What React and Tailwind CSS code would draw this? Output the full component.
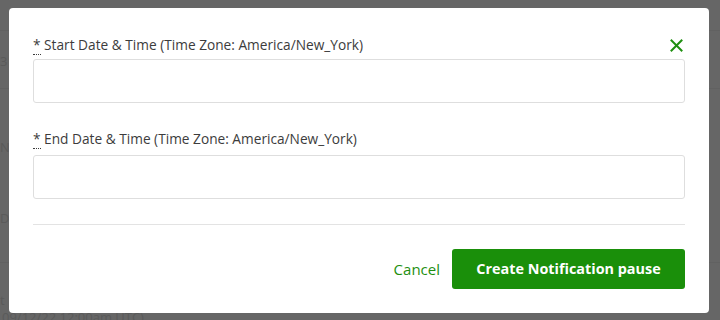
import React from "react";

export default function App() {
  const font = { fontFamily: '"Open Sans", "Noto Sans", sans-serif' };
  return (
    <div className="relative h-[320px] w-[720px] overflow-hidden bg-[#666666]" style={font}>
      {/* faint background page content behind the overlay */}
      <div className="absolute inset-0 text-[13px] text-[#5a5a5a]">
        <div className="absolute left-0 top-[52px]">31</div>
        <div className="absolute left-0 top-[138px]">N</div>
        <div className="absolute left-0 top-[209px]">D</div>
        <div className="absolute left-0 top-[291px]">t</div>
        <div className="absolute left-[2px] top-[308px]">09/12/22 12:00am UTC)</div>
        <div className="absolute left-0 right-0 top-[30px] h-px bg-[#616161]" />
        <div className="absolute left-0 right-0 top-[88px] h-px bg-[#616161]" />
        <div className="absolute left-0 right-0 top-[262px] h-px bg-[#616161]" />
      </div>

      <div className="absolute left-[9px] top-[8px] flex h-[305px] w-[700px] flex-col rounded-[4px] bg-white px-[24px] pt-[27px]">
        <div className="flex items-center justify-between">
          <label className="text-[13.7px] leading-[20px] text-[#3c3c3c]">
            <abbr className="no-underline border-b border-dotted border-[#3c3c3c]" title="required">*</abbr> Start Date &amp; Time (Time Zone: America/New_York)
          </label>
          <button className="mr-[2px] flex h-[14px] w-[14px] items-center justify-center text-[#1e8f10]">
            <svg width="13" height="13" viewBox="0 0 13 13" fill="none" stroke="currentColor" strokeWidth="2" strokeLinecap="square">
              <path d="M1.5 1.5 L11.5 11.5 M11.5 1.5 L1.5 11.5" />
            </svg>
          </button>
        </div>
        <input className="mt-[4px] h-[44px] w-full rounded-[3px] border border-[#dedede] bg-white" />

        <label className="mt-[26px] text-[13.7px] leading-[20px] text-[#3c3c3c]">
          <abbr className="no-underline border-b border-dotted border-[#3c3c3c]" title="required">*</abbr> End Date &amp; Time (Time Zone: America/New_York)
        </label>
        <input className="mt-[6px] h-[44px] w-full rounded-[3px] border border-[#dedede] bg-white" />

        <div className="mt-[25px] h-px w-full bg-[#e3e3e3]" />

        <div className="mt-[24px] flex items-center justify-end gap-[12px]">
          <button className="px-0 text-[15px] text-[#1e8f10]">Cancel</button>
          <button className="h-[40px] w-[233px] rounded-[3px] bg-[#1a8f0a] text-[14.4px] font-bold text-white">
            Create Notification pause
          </button>
        </div>
      </div>
    </div>
  );
}
